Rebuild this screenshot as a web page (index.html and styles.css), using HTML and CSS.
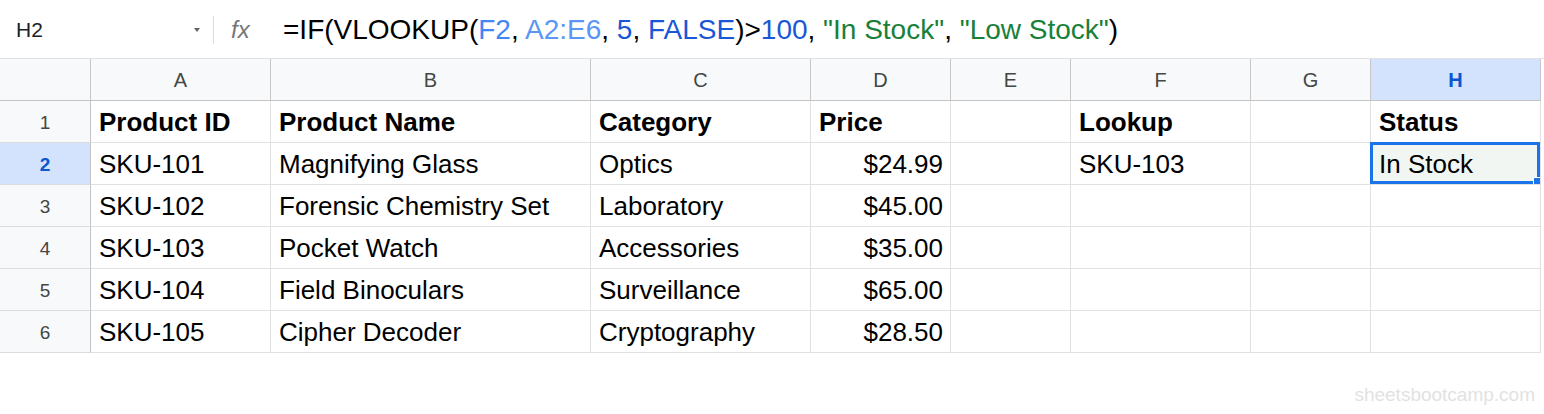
FILE: index.html
```html
<!DOCTYPE html>
<html>
<head>
<meta charset="utf-8">
<link rel="stylesheet" href="styles.css">
</head>
<body>
<div class="fbar">
  <div class="namebox">
    <span class="nb-text">H2</span>
    <svg class="nb-arrow" width="6" height="4" viewBox="0 0 6 4"><path d="M0 0 L6 0 L3 4 Z" fill="#5f6368"/></svg>
  </div>
  <div class="sep"></div>
  <div class="fx">fx</div>
  <div class="formula">=IF(VLOOKUP(<span class="r1">F2</span>, <span class="r2">A2:E6</span>, <span class="num">5</span>, <span class="num">FALSE</span>)&gt;<span class="num">100</span>, <span class="str">"In Stock"</span>, <span class="str">"Low Stock"</span>)</div>
</div>
<div class="grid">
  <div class="ch corner"></div>
  <div class="ch">A</div><div class="ch">B</div><div class="ch">C</div><div class="ch">D</div><div class="ch">E</div><div class="ch">F</div><div class="ch">G</div><div class="ch ch-sel">H</div>

  <div class="rh">1</div>
  <div class="c b">Product ID</div><div class="c b">Product Name</div><div class="c b">Category</div><div class="c b">Price</div><div class="c"></div><div class="c b">Lookup</div><div class="c"></div><div class="c b">Status</div>

  <div class="rh rh-sel">2</div>
  <div class="c">SKU-101</div><div class="c">Magnifying Glass</div><div class="c">Optics</div><div class="c num-r">$24.99</div><div class="c"></div><div class="c">SKU-103</div><div class="c"></div><div class="c sel">In Stock</div>

  <div class="rh">3</div>
  <div class="c">SKU-102</div><div class="c">Forensic Chemistry Set</div><div class="c">Laboratory</div><div class="c num-r">$45.00</div><div class="c"></div><div class="c"></div><div class="c"></div><div class="c"></div>

  <div class="rh">4</div>
  <div class="c">SKU-103</div><div class="c">Pocket Watch</div><div class="c">Accessories</div><div class="c num-r">$35.00</div><div class="c"></div><div class="c"></div><div class="c"></div><div class="c"></div>

  <div class="rh">5</div>
  <div class="c">SKU-104</div><div class="c">Field Binoculars</div><div class="c">Surveillance</div><div class="c num-r">$65.00</div><div class="c"></div><div class="c"></div><div class="c"></div><div class="c"></div>

  <div class="rh">6</div>
  <div class="c">SKU-105</div><div class="c">Cipher Decoder</div><div class="c">Cryptography</div><div class="c num-r">$28.50</div><div class="c"></div><div class="c"></div><div class="c"></div><div class="c"></div>
</div>
<div class="watermark">sheetsbootcamp.com</div>
</body>
</html>
```

FILE: styles.css
```css
html, body {
  margin: 0;
  padding: 0;
  background: #ffffff;
}
body {
  font-family: "Liberation Sans", Arial, sans-serif;
  color: #000;
  position: relative;
  width: 1544px;
  height: 414px;
  overflow: hidden;
}
.fbar {
  height: 58px;
  border-bottom: 1px solid #e1e1e1;
  display: flex;
  align-items: center;
  padding-top: 2px;
  box-sizing: border-box;
  height: 59px;
}
.namebox {
  width: 213px;
  box-sizing: border-box;
  padding-left: 16px;
  padding-right: 13px;
  display: flex;
  align-items: center;
  justify-content: space-between;
}
.nb-text {
  font-size: 21px;
  color: #202124;
}
.nb-arrow {
  display: block;
}
.sep {
  width: 1px;
  height: 28px;
  background: #dadce0;
}
.fx {
  margin-left: 17px;
  font-size: 24px;
  font-style: italic;
  color: #777;
  width: 52px;
}
.formula {
  font-size: 28px;
  color: #000;
  white-space: nowrap;
}
.r1 { color: #4285f4; }
.r2 { color: #5b95f5; }
.num { color: #1a57d6; }
.str { color: #188038; }

.grid {
  display: grid;
  grid-template-columns: 91px 180px 320px 220px 140px 120px 180px 120px 170px;
  grid-auto-rows: 42px;
  width: 1541px;
}
.grid > div {
  box-sizing: border-box;
  border-right: 1px solid #e1e1e1;
  border-bottom: 1px solid #e1e1e1;
  display: flex;
  align-items: center;
  white-space: nowrap;
  overflow: visible;
  padding-top: 2px;
}
.grid > .ch {
  background: #f8f9fa;
  border-right-color: #c7c7c7;
  border-bottom-color: #c4c4c4;
  justify-content: center;
  font-size: 20px;
  color: #444746;
}
.grid > .ch-sel {
  background: #d3e3fd;
  color: #0b57d0;
  font-weight: bold;
}
.grid > .rh {
  background: #f8f9fa;
  border-right-color: #c4c4c4;
  border-bottom-color: #dcdcdc;
  justify-content: center;
  font-size: 19px;
  color: #444746;
}
.grid > .rh-sel {
  background: #d3e3fd;
  color: #0b57d0;
  font-weight: bold;
}
.c {
  padding-left: 8px;
  padding-right: 7px;
  font-size: 26px;
}
.c.b {
  font-weight: bold;
}
.c.num-r {
  justify-content: flex-end;
}
.c.sel {
  position: relative;
  background: #f1f6f2;
}
.c.sel::after {
  content: "";
  position: absolute;
  left: -1px;
  top: -1px;
  right: 0;
  bottom: 0;
  border: 3px solid #1a73e8;
}
.c.sel::before {
  content: "";
  position: absolute;
  right: 0;
  bottom: 0;
  width: 6px;
  height: 6px;
  background: #1a73e8;
  border-left: 1px solid #fff;
  border-top: 1px solid #fff;
  z-index: 2;
}
.watermark {
  position: absolute;
  right: 9px;
  top: 384px;
  font-size: 19px;
  color: #e2e2e2;
}
```
